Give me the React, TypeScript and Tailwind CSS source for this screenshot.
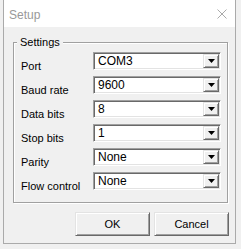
import React from "react";

const rows: { label: string; value: string }[] = [
  { label: "Port", value: "COM3" },
  { label: "Baud rate", value: "9600" },
  { label: "Data bits", value: "8" },
  { label: "Stop bits", value: "1" },
  { label: "Parity", value: "None" },
  { label: "Flow control", value: "None" },
];

function Combo({ value }: { value: string }) {
  return (
    <div className="w-[128px] h-[18px] bg-white flex items-stretch border border-t-[#a0a0a0] border-l-[#a0a0a0] border-b-white border-r-white shadow-[inset_1px_1px_0_#696969,inset_-1px_-1px_0_#e3e3e3] p-[1px]">
      <div className="flex-1 flex items-center pl-[3px] text-[12px] leading-[14px] text-black">
        {value}
      </div>
      <div className="w-[16px] bg-[#f0f0f0] flex items-center justify-center border border-t-[#e3e3e3] border-l-[#e3e3e3] border-b-[#696969] border-r-[#696969] shadow-[inset_1px_1px_0_#ffffff,inset_-1px_-1px_0_#a0a0a0]">
        <svg width="7" height="4" viewBox="0 0 7 4">
          <polygon points="0,0 7,0 3.5,4" fill="#000" />
        </svg>
      </div>
    </div>
  );
}

function Button({ children }: { children: React.ReactNode }) {
  return (
    <button className="w-[75px] h-[24px] bg-[#f0f0f0] text-[11px] leading-[13px] text-black border border-t-[#e3e3e3] border-l-[#e3e3e3] border-b-[#696969] border-r-[#696969] shadow-[inset_1px_1px_0_#ffffff,inset_-1px_-1px_0_#a0a0a0]">
      {children}
    </button>
  );
}

export default function App() {
  return (
    <div className="w-[241px] h-[249px] bg-[#f0f0f0] font-['Liberation_Sans',Arial,sans-serif]">
      <div className="ml-[3px] w-[233px] h-[244px] border-x border-b border-[#aaaaaa] bg-[#f0f0f0] flex flex-col">
        <div className="h-[27px] bg-white flex items-center justify-between">
          <span className="pl-[5px] mt-[2px] text-[12px] leading-[14px] text-[#999999]">
            Setup
          </span>
          <svg width="10" height="10" viewBox="0 0 10 10" className="mr-[8px]">
            <path d="M0.5 0.5 L9.5 9.5 M9.5 0.5 L0.5 9.5" stroke="#aaaaaa" strokeWidth="1" />
          </svg>
        </div>

        <div className="relative mt-[15px] ml-[9px] w-[215px] h-[161px] border border-[#a0a0a0] shadow-[inset_1px_1px_0_#ffffff,1px_1px_0_#ffffff]">
          <span className="absolute -top-[7px] left-[3px] px-[3px] bg-[#f0f0f0] text-[11px] leading-[13px] text-black">
            Settings
          </span>
          <div className="pt-[9px] pl-[7px] flex flex-col gap-[6px]">
            {rows.map((r) => (
              <div key={r.label} className="h-[18px] flex">
                <div className="w-[72px] pt-[8px] text-[11px] leading-[13px] text-black whitespace-nowrap">
                  {r.label}
                </div>
                <Combo value={r.value} />
              </div>
            ))}
          </div>
        </div>

        <div className="mt-[9px] ml-[71px] flex gap-[4px]">
          <Button>OK</Button>
          <Button>Cancel</Button>
        </div>
      </div>
    </div>
  );
}
